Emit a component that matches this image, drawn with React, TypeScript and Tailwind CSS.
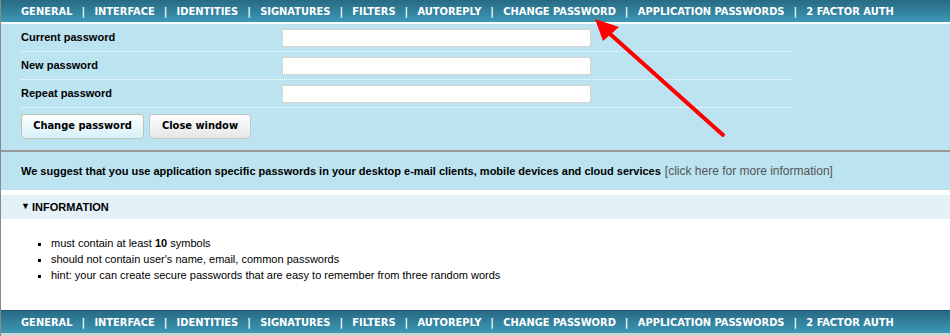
import React from 'react';

const NAV_ITEMS = [
  'GENERAL',
  'INTERFACE',
  'IDENTITIES',
  'SIGNATURES',
  'FILTERS',
  'AUTOREPLY',
  'CHANGE PASSWORD',
  'APPLICATION PASSWORDS',
  '2 FACTOR AUTH',
];

const NavBar: React.FC = () => (
  <nav className="h-[22px] pt-[3px] bg-gradient-to-b from-[#286a84] to-[#3c98b6] flex items-center pl-5 font-['DejaVu_Sans_Condensed','DejaVu_Sans',sans-serif] text-[11px] font-bold text-white">
    {NAV_ITEMS.map((item, i) => (
      <React.Fragment key={item}>
        {i > 0 && <span className="pl-[9px] pr-[9.25px]">|</span>}
        <a href="#" className="whitespace-nowrap">
          {item}
        </a>
      </React.Fragment>
    ))}
  </nav>
);

const FIELDS = ['Current password', 'New password', 'Repeat password'];

const App: React.FC = () => {
  return (
    <div className="relative w-[950px] h-[336px] overflow-hidden bg-[#d4d4d4] border-l border-[#8a8a8a] font-['Liberation_Sans',Arial,sans-serif] text-black">
      <NavBar />
      <div className="h-[2px] bg-white" />

      {/* change password form */}
      <div className="bg-[#bce3f0] pl-5">
        <div className="w-[770px]">
          {FIELDS.map((label) => (
            <div
              key={label}
              className="h-[28px] flex items-center border-b border-dotted border-white"
            >
              <span className="w-[261px] text-[11px] font-bold">{label}</span>
              <input
                type="password"
                className="w-[309px] h-[18px] bg-white border border-[#d6d3cc] outline-none"
              />
            </div>
          ))}
        </div>
        <div className="flex gap-[5px] pt-[6px] pb-[11px] font-['DejaVu_Sans_Condensed','DejaVu_Sans',sans-serif] text-[11px] font-bold">
          <button className="h-[25px] w-[123px] rounded-[4px] border border-[#b9c9b0] bg-gradient-to-b from-white to-[#d6f0fa]">
            Change password
          </button>
          <button className="h-[25px] w-[102px] rounded-[4px] border border-[#c6c6c6] bg-gradient-to-b from-white to-[#e6e6e6]">
            Close window
          </button>
        </div>
      </div>

      <div className="h-[2px] bg-[#999999]" />
      <div className="h-[38px] bg-[#bce3f0] pl-5 flex items-center text-[11px]">
        <span className="font-bold">
          We suggest that you use application specific passwords in your desktop e-mail clients, mobile devices and cloud services
        </span>
        <a href="#" className="ml-[4px] text-[12px] text-[#555555]">
          [click here for more information]
        </a>
      </div>

      <div className="bg-white pt-[5px]">
        <div className="h-[24px] bg-[#e4f2f8] pl-5 flex items-center text-[11px] font-bold">
          <span className="text-[9px] mr-[2px]">▼</span>
          INFORMATION
        </div>
        <ul className="h-[91px] pt-[16px] pl-[50px] text-[11px] leading-[16px] list-[square]">
          <li>
            must contain at least <b>10</b> symbols
          </li>
          <li>should not contain user's name, email, common passwords</li>
          <li>hint: your can create secure passwords that are easy to remember from three random words</li>
        </ul>
      </div>

      <div className="border-t border-[#1c5a7b]">
        <NavBar />
      </div>

      {/* red annotation arrow */}
      <svg className="absolute left-0 top-0 pointer-events-none" width="950" height="336">
        <line x1="722" y1="135" x2="608" y2="33" stroke="#ff0000" strokeWidth="4" strokeLinecap="round" />
        <polygon points="594,19 602,41 618,27" fill="#ff0000" />
      </svg>
    </div>
  );
};

export default App;
